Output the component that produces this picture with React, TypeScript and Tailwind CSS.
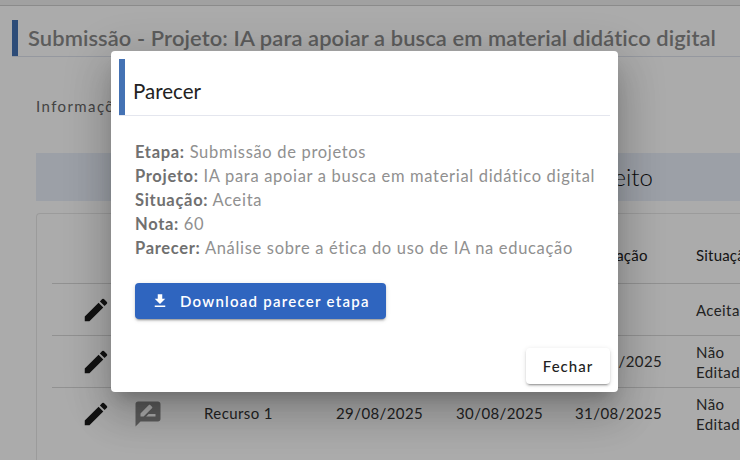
import React from "react";

const Pencil = () => (
  <svg viewBox="0 0 24 24" className="w-[30px] h-[30px] text-[#1c1c1c] shrink-0" fill="currentColor">
    <path d="M3 17.25V21h3.75L17.81 9.94l-3.75-3.75L3 17.25zM20.71 7.04a1 1 0 0 0 0-1.41l-2.34-2.34a1 1 0 0 0-1.41 0l-1.83 1.83 3.75 3.75 1.83-1.83z" />
  </svg>
);

const Note = () => (
  <svg viewBox="0 0 24 24" className="w-[30px] h-[30px] text-[#888] shrink-0" fill="currentColor">
    <path d="M20 2H4c-1.1 0-1.99.9-1.99 2L2 22l4-4h14c1.1 0 2-.9 2-2V4c0-1.1-.9-2-2-2zM6 14v-2.47l6.88-6.88c.2-.2.51-.2.71 0l1.77 1.77c.2.2.2.51 0 .71L8.47 14H6zm12 0h-7.5l2-2H18v2z" />
  </svg>
);

function Row({ dates, status, icon, name }: { dates: string[]; status: string[]; icon?: boolean; name?: string }) {
  return (
    <div className="flex items-center h-[52px] w-[740px] border-t border-[#d8d8d8] text-[15px] tracking-[0.4px] text-[#333] whitespace-nowrap">
      <div className="w-[60px] shrink-0 pl-[29px] flex"><Pencil /></div>
      <div className="w-[64px] shrink-0 pl-[21px] flex">{icon && <Note />}</div>
      <div className="w-[160px] shrink-0 pl-[28px]">{name}</div>
      <div className="w-[120px] shrink-0">{dates[0]}</div>
      <div className="w-[119px] shrink-0">{dates[1]}</div>
      <div className="w-[121px] shrink-0">{dates[2]}</div>
      <div className="shrink-0 leading-[30px]">{status.map((s) => <div key={s} className="h-[20px] leading-[20px]">{s}</div>)}</div>
    </div>
  );
}

export default function App() {
  return (
    <div className="relative w-[740px] h-[460px] overflow-hidden bg-white font-['Lato','Open_Sans',sans-serif]">
      <div className="h-[6px] bg-[#f0f0f0] border-b border-[#d0d0d0]" />
      <div className="pt-[14px] pl-[12px]">
        <div className="flex h-[37px] border-b border-[#dfe3ee]">
          <div className="w-[6px] bg-[#4472b4]" />
          <h1 className="pl-[10px] pt-[5px] text-[21.9px] leading-[26px] font-semibold tracking-[0.1px] text-[#8a8a8a] whitespace-nowrap">
            Submissão - Projeto: IA para apoiar a busca em material didático digital
          </h1>
        </div>
      </div>
      <div className="pl-[36px] pt-[39px] text-[15px] leading-[20px] tracking-[1.4px] text-[#666] whitespace-nowrap">Informações</div>
      <div className="ml-[36px] mt-[37px] h-[48px] bg-[#e9effa] flex items-center text-[24px] font-light text-[#111] whitespace-nowrap">
        <span className="pl-[551px]">Aceito</span>
      </div>
      <div className="ml-[36px] mt-[12px] h-[300px] border-l border-t border-[#e8e8e8] pl-[15px] rounded-tl overflow-hidden">
        <div className="h-[69px] flex items-center text-[15px] tracking-[0.2px] text-[#222] pl-[523px] pt-[14px] whitespace-nowrap">
          <span className="w-[121px] shrink-0">Publicação</span>
          <span className="shrink-0">Situação</span>
        </div>
        <Row dates={["", "", ""]} status={["Aceita"]} />
        <Row dates={["", "", "30/09/2025"]} status={["Não", "Editada"]} />
        <Row icon name="Recurso 1" dates={["29/08/2025", "30/08/2025", "31/08/2025"]} status={["Não", "Editada"]} />
      </div>

      <div className="absolute inset-0 bg-black/[.33]" />
      <div className="absolute left-[111px] top-[51px] w-[507px] h-[341px] bg-white rounded-[4px] shadow-[0_11px_15px_-7px_rgba(0,0,0,0.2),0_24px_38px_3px_rgba(0,0,0,0.14),0_9px_46px_8px_rgba(0,0,0,0.12)] flex flex-col">
        <div className="mt-[8px] mx-[8px] flex h-[57px] border-b border-[#e4e6ee]">
          <div className="w-[6px] bg-[#4472b4]" />
          <div className="pl-[8px] pt-[19px] text-[20.5px] leading-[26px] text-[#222]">Parecer</div>
        </div>
        <div className="pl-[24px] pt-[24px] text-[16.5px] leading-[24px] tracking-[0.68px] text-[#909090] whitespace-nowrap">
          <div><b className="font-bold text-[#707070]">Etapa:</b> Submissão de projetos</div>
          <div><b className="font-bold text-[#707070]">Projeto:</b> IA para apoiar a busca em material didático digital</div>
          <div><b className="font-bold text-[#707070]">Situação:</b> Aceita</div>
          <div><b className="font-bold text-[#707070]">Nota:</b> 60</div>
          <div><b className="font-bold text-[#707070]">Parecer:</b> Análise sobre a ética do uso de IA na educação</div>
        </div>
        <div className="pl-[24px] pt-[23px]">
          <button className="w-[251px] h-[36px] rounded-[4px] bg-[#2f65bf] text-white flex items-center pl-[16px] gap-[11px] text-[15px] font-semibold tracking-[1.25px] whitespace-nowrap shadow-[0_3px_1px_-2px_rgba(0,0,0,0.2),0_2px_2px_0_rgba(0,0,0,0.14),0_1px_5px_0_rgba(0,0,0,0.12)]">
            <svg viewBox="0 0 24 24" className="w-[18px] h-[18px]" fill="currentColor"><path d="M19 9h-4V3H9v6H5l7 7 7-7zM5 18v2h14v-2H5z" /></svg>
            Download parecer etapa
          </button>
        </div>
        <div className="flex justify-end pr-[8px] pt-[29px]">
          <button className="w-[84px] h-[36px] rounded-[4px] bg-white text-[#222] text-[15px] font-medium tracking-[1px] shadow-[0_3px_1px_-2px_rgba(0,0,0,0.2),0_2px_2px_0_rgba(0,0,0,0.14),0_1px_5px_0_rgba(0,0,0,0.12)]">Fechar</button>
        </div>
      </div>
    </div>
  );
}
